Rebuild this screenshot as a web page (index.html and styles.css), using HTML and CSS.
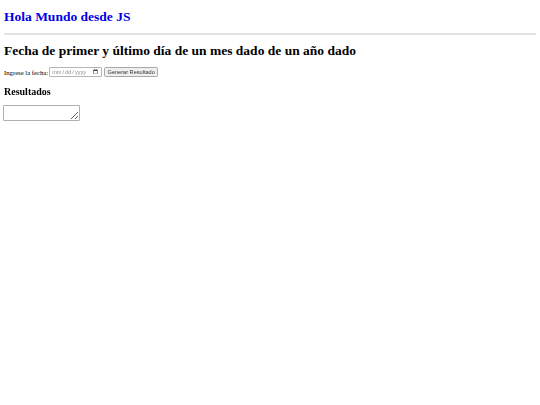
FILE: index.html
```html
<!DOCTYPE html>
<html lang="es">
<head>
<meta charset="utf-8">
<title>Hola Mundo desde JS</title>
<link rel="stylesheet" href="styles.css">
</head>
<body>
<h1 class="title">Hola Mundo desde JS</h1>
<hr class="rule">
<h1 class="heading">Fecha de primer y último día de un mes dado de un año dado</h1>
<div class="row">
<label class="label" for="fecha">Ingrese la fecha:</label>
<input class="date" type="date" id="fecha">
<button class="btn" type="button">Generar Resultado</button>
</div>
<h2 class="sub">Resultados</h2>
<textarea class="result"></textarea>
</body>
</html>
```
FILE: styles.css
```css
html, body {
  margin: 0;
  padding: 0;
  background: #fff;
}
body {
  padding: 4px;
  font-family: "Liberation Serif", "Times New Roman", serif;
  font-size: 6.7px;
  color: #000;
}
.title {
  margin: 5px 0 0;
  font-size: 13.5px;
  line-height: 15px;
  font-weight: bold;
  color: #0000e6;
}
.rule {
  margin: 9px 0 0;
  border: 0;
  height: 2px;
  background: #e3e3e3;
}
.heading {
  margin: 8px 0 0;
  font-size: 13.5px;
  line-height: 15px;
  font-weight: bold;
}
.row {
  margin-top: 9px;
  display: flex;
  align-items: center;
  height: 10px;
}
.label {
  font-size: 6.7px;
  margin-right: 1px;
}
.date {
  box-sizing: border-box;
  width: 53px;
  height: 10px;
  margin: 0 2px 0 0;
  padding: 0 1px;
  font-family: "Liberation Sans", Arial, sans-serif;
  font-size: 5.6px;
  border: 1px solid #b5b5b5;
  border-radius: 1px;
  color: #8a8a8a;
}
.btn {
  box-sizing: border-box;
  width: 54px;
  height: 10px;
  margin: 0;
  padding: 0;
  font-family: "Liberation Sans", Arial, sans-serif;
  font-size: 5.6px;
  line-height: 8px;
  border: 1px solid #a8a8a8;
  border-radius: 1.5px;
  background: #efefef;
  color: #333;
}
.sub {
  margin: 9px 0 0;
  font-size: 10px;
  line-height: 12px;
  font-weight: bold;
}
.result {
  display: block;
  box-sizing: border-box;
  margin: 7px 0 0 -1px;
  width: 77px;
  height: 16px;
  border: 1px solid #b0b0b0;
  border-radius: 1px;
  padding: 0;
}
```
